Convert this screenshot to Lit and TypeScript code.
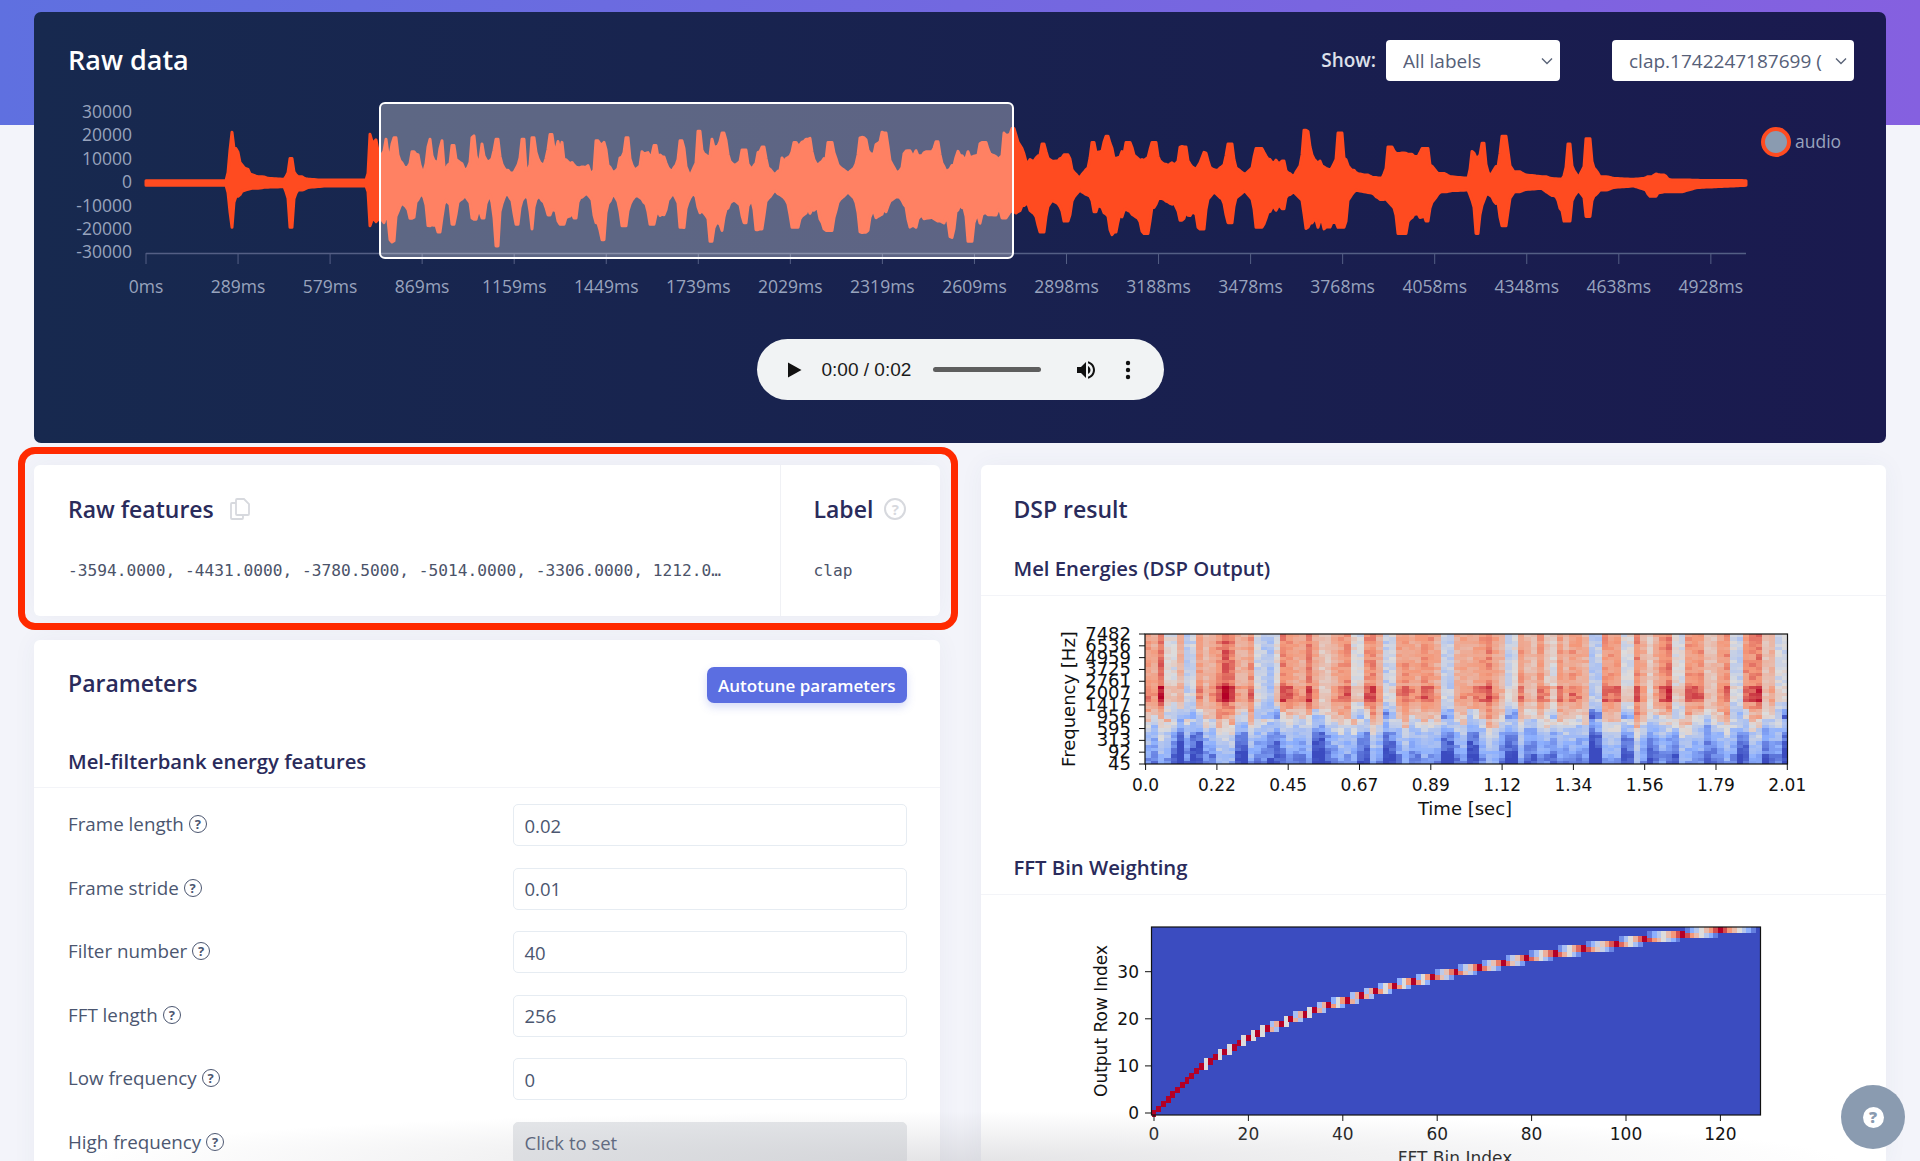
import { LitElement, css, html, svg } from "lit";
import { customElement } from "lit/decorators.js";

type Pt = [number, number];

// envelope read off the reference, in three different crops
const z7 = (p: number[]): Pt[] => pairs(p).map(([x, y]) => [360 + x / 3, 90 + y / 3]);
const z1 = (p: number[]): Pt[] => pairs(p).map(([x, y]) => [x / 1.633, y / 3]);
const z2 = (p: number[]): Pt[] => pairs(p).map(([x, y]) => [960 + x / 1.633, y / 3]);

function pairs(p: number[]): Pt[] {
    const out: Pt[] = [];
    for (let i = 0; i < p.length; i += 2) out.push([p[i], p[i + 1]]);
    return out;
}

let seed = 1337;
function rnd() {
    seed = (seed * 16807) % 2147483647;
    return seed / 2147483647;
}

const waveTop: Pt[] = [
    ...z1([238, 542, 370, 542, 378, 387, 385, 440, 400, 505, 420, 530, 465, 538, 475, 472, 485, 530, 520, 540, 600, 540, 604, 394, 615, 402]),
    ...z7([60, 190, 80, 140, 90, 165, 105, 142, 120, 210, 140, 235, 160, 185, 175, 190, 190, 245, 210, 140, 225, 215, 245, 145, 255, 240, 280, 160, 300, 200, 320, 240, 340, 135, 352, 210, 365, 155, 380, 210, 410, 140, 440, 240, 460, 250, 490, 140, 500, 250, 520, 135, 550, 230, 570, 125, 600, 150, 630, 215, 680, 225, 700, 250, 710, 145, 730, 150, 760, 250, 785, 200, 800, 135, 825, 235, 850, 180, 885, 160, 910, 200, 935, 245, 965, 145, 990, 260, 1020, 120, 1035, 180, 1060, 140, 1090, 120, 1120, 220, 1155, 175, 1175, 235, 1200, 180]),
    ...z1([1215, 445, 1245, 435, 1265, 525, 1280, 470, 1300, 420, 1320, 410, 1340, 490, 1355, 420, 1385, 520, 1410, 410, 1425, 440, 1445, 390, 1465, 520, 1480, 450, 1520, 450, 1530, 420, 1545, 510, 1567, 450]),
    ...z2([15, 450, 40, 420, 60, 460, 75, 390, 87, 375, 100, 440, 120, 480, 135, 425, 150, 470, 175, 460, 195, 535, 220, 420, 240, 400, 255, 460, 275, 420, 295, 480, 315, 420, 340, 490, 365, 435, 385, 500, 400, 455, 420, 510, 440, 425, 465, 525, 485, 440, 525, 480, 545, 530, 565, 385, 585, 480, 605, 510, 620, 390, 640, 510, 660, 525, 690, 535, 700, 435, 730, 440, 760, 440, 780, 520, 830, 535, 835, 450, 855, 425, 865, 530, 890, 400, 905, 515, 950, 530, 985, 538, 993, 425, 1010, 535, 1025, 415, 1045, 530, 1100, 538, 1130, 530, 1135, 522, 1150, 525, 1160, 540, 1284, 542]),
];

const waveBottom: Pt[] = [
    ...z1([238, 556, 370, 556, 378, 690, 385, 590, 410, 565, 465, 560, 475, 690, 485, 570, 530, 558, 600, 558, 604, 685, 615, 680]),
    ...z7([60, 400, 95, 460, 125, 340, 155, 385, 185, 315, 210, 415, 240, 435, 260, 330, 280, 410, 315, 320, 340, 390, 370, 390, 390, 320, 408, 480, 440, 310, 470, 410, 500, 315, 515, 425, 535, 320, 570, 380, 605, 410, 640, 390, 680, 310, 710, 405, 725, 460, 760, 310, 790, 415, 830, 320, 880, 410, 910, 375, 940, 310, 965, 420, 1000, 310, 1020, 370, 1055, 465, 1080, 430, 1120, 335, 1155, 405, 1175, 335, 1200, 425]),
    ...z1([1235, 695, 1265, 570, 1300, 690, 1320, 640, 1355, 700, 1385, 575, 1410, 700, 1445, 640, 1465, 590, 1490, 685, 1525, 660, 1555, 720, 1567, 620]),
    ...z2([15, 735, 40, 660, 75, 660, 87, 640, 110, 630, 135, 705, 150, 610, 175, 670, 195, 570, 225, 640, 252, 705, 275, 640, 305, 710, 325, 600, 365, 665, 395, 690, 415, 575, 440, 675, 465, 570, 487, 690, 525, 630, 545, 575, 570, 690, 585, 690, 625, 690, 645, 570, 695, 600, 720, 710, 760, 670, 785, 575, 830, 570, 845, 710, 860, 580, 890, 685, 905, 575, 950, 565, 993, 670, 1010, 570, 1025, 650, 1045, 570, 1100, 558, 1133, 590, 1150, 575, 1284, 556]),
];

const MID = 183;

// flat top at each peak, a steep wall, then a slow slide down to the valley
function sample(list: Pt[], x: number) {
    let i = 0;
    while (i < list.length - 2 && list[i + 1][0] < x) i++;
    const [ax, ay] = list[i];
    const [bx, by] = list[i + 1];
    const t = bx === ax ? 1 : Math.min(1, Math.max(0, (x - ax) / (bx - ax)));
    const aAmp = Math.abs(ay - MID);
    const bAmp = Math.abs(by - MID);
    const d = aAmp > bAmp ? t : 1 - t;
    let f = 0;
    if (d < 0.22) f = 1;
    else if (d < 0.4) f = 1 - ((d - 0.22) / 0.18) * 0.65;
    else f = 0.35 * (1 - (d - 0.4) / 0.6);
    const low = Math.min(aAmp, bAmp);
    const high = Math.max(aAmp, bAmp);
    return { amp: low + (high - low) * f, atPeak: f === 1 };
}

const wavePoints = (() => {
    const top = [...waveTop].sort((a, b) => a[0] - b[0]);
    const bottom = [...waveBottom].sort((a, b) => a[0] - b[0]);
    const up: string[] = [];
    const down: string[] = [];
    let hold = 1;
    let left = 0;
    for (let x = 146; x <= 1746; x += 2) {
        if (left-- <= 0) {
            hold = 0.62 + rnd() * 0.38;
            left = Math.floor(rnd() * 3);
        }
        const shape = (s: { amp: number; atPeak: boolean }) => {
            const core = 9;
            if (s.amp <= core) return s.amp;
            return core + (s.amp - core) * (s.atPeak ? Math.max(hold, 0.93) : hold);
        };
        up.push(`${x},${(MID - shape(sample(top, x))).toFixed(1)}`);
        down.unshift(`${x},${(MID + shape(sample(bottom, x))).toFixed(1)}`);
    }
    return [...up, ...down].join(" ");
})();

const yLabels = ["30000", "20000", "10000", "0", "-10000", "-20000", "-30000"];
const xLabels = ["0ms", "289ms", "579ms", "869ms", "1159ms", "1449ms", "1739ms", "2029ms", "2319ms", "2609ms", "2898ms", "3188ms", "3478ms", "3768ms", "4058ms", "4348ms", "4638ms", "4928ms"];

// matplotlib coolwarm, roughly
function coolwarm(t: number): string {
    const stops = [
        [59, 76, 192],
        [141, 176, 254],
        [221, 220, 220],
        [244, 152, 122],
        [180, 4, 38],
    ];
    const v = Math.min(0.999, Math.max(0, t)) * 4;
    const i = Math.floor(v);
    const f = v - i;
    const c = stops[i].map((s, k) => Math.round(s + (stops[i + 1][k] - s) * f));
    return `rgb(${c[0]},${c[1]},${c[2]})`;
}

const COLS = 100;
const ROWS = 40;
const lightCols = [240, 285, 420, 450, 610, 670, 790, 910, 990, 1075, 1135, 1240, 1350, 1440].map(x => Math.round(((x - 205) / 1260) * COLS));
const deepCols = [250, 290, 380, 460, 530, 620, 670, 790, 830, 910, 985, 1080, 1140, 1230, 1370, 1450].map(x => Math.round(((x - 205) / 1260) * COLS));

function rowProfile(r: number) {
    if (r < 2) return 0.14;
    if (r < 6) return 0.24;
    if (r < 10) return 0.32;
    if (r < 13) return 0.44;
    if (r < 16) return 0.6;
    if (r < 19) return 0.68;
    if (r < 24) return 0.77;
    return 0.7;
}

const spectroCells = (() => {
    const colEnergy: number[] = [];
    const colShift: number[] = [];
    const phaseA = rnd() * 6.28;
    const phaseB = rnd() * 6.28;
    for (let c = 0; c < COLS; c++) {
        colEnergy.push((rnd() - 0.5) * 0.1 + Math.sin(c * 0.62 + phaseA) * 0.05 + Math.sin(c * 1.37 + phaseB) * 0.05);
        colShift.push(Math.round((rnd() - 0.5) * 5));
    }
    const cells = [];
    for (let c = 0; c < COLS; c++) {
        const light = lightCols.some(l => c === l || c === l + 1);
        const deep = deepCols.some(l => c === l || c === l + 1);
        for (let r = 0; r < ROWS; r++) {
            const shifted = r < 17 ? r + colShift[c] - (deep ? 3 : 0) : r;
            const boost = r >= 19 && r < 24 ? 1.7 : 1;
            let v = rowProfile(shifted) + colEnergy[c] * boost + (rnd() - 0.5) * 0.11;
            if (light && r >= 14) v -= 0.2 + rnd() * 0.06;
            if (deep && r < 10) v -= 0.12;
            cells.push({ x: 1145 + c * 6.43, y: 635 + (ROWS - 1 - r) * 3.25, fill: coolwarm(v) });
        }
    }
    return cells;
})();

// real mel filterbank: 40 filters over 129 bins at 16 kHz
const melCells = (() => {
    const toMel = (f: number) => 2595 * Math.log10(1 + f / 700);
    const toHz = (m: number) => 700 * (Math.pow(10, m / 2595) - 1);
    const top = toMel(8000);
    const bins: number[] = [];
    for (let i = 0; i < 42; i++) bins.push(Math.floor((257 * toHz((top * i) / 41)) / 16000));
    const cells = [];
    for (let r = 0; r < 40; r++) {
        const [a, b, c] = [bins[r], bins[r + 1], bins[r + 2]];
        for (let k = a; k <= c; k++) {
            const w = k <= b ? (b === a ? 1 : (k - a) / (b - a)) : (c - k) / (c - b);
            if (w <= 0) continue;
            cells.push({ x: 1151.6 + k * 4.72, y: 1113.6 - 4.71 * (r + 0.5), fill: coolwarm(w) });
        }
    }
    return cells;
})();

const params = [
    { label: "Frame length", value: "0.02" },
    { label: "Frame stride", value: "0.01" },
    { label: "Filter number", value: "40" },
    { label: "FFT length", value: "256" },
    { label: "Low frequency", value: "0" },
    { label: "High frequency", value: "Click to set", disabled: true },
];

const chevron = html`<svg class="chev" viewBox="0 0 12 8" width="12" height="8"><path d="M1 1.5l5 5 5-5" fill="none" stroke="#5a6478" stroke-width="1.4"/></svg>`;

@customElement("app-root")
export class AppRoot extends LitElement {
    static styles = css`
        :host {
            display: block;
            position: relative;
            width: 1920px;
            height: 1161px;
            overflow: hidden;
            background: #f3f4fa;
            font-family: "Open Sans", "Noto Sans", sans-serif;
            color: #2a2b5b;
        }

        .banner {
            position: absolute;
            left: 0;
            right: 0;
            top: 0;
            height: 125px;
            background: linear-gradient(90deg, #5f70e0, #8560e0);
        }

        .page {
            position: relative;
            padding: 12px 34px 0;
        }

        /* raw data */
        .raw {
            background: linear-gradient(90deg, #17294f, #1a1a4f);
            border-radius: 7px;
            padding: 28px 0 43px;
            display: flex;
            flex-direction: column;
            align-items: center;
        }
        .raw-head {
            align-self: stretch;
            display: flex;
            align-items: center;
            height: 41px;
            padding: 0 32px 0 34px;
        }
        .raw-title {
            color: #fff;
            font-size: 27px;
            font-weight: 600;
            margin: 0 auto 0 0;
            position: relative;
            top: -1px;
        }
        .show {
            color: #dde0ea;
            font-size: 19px;
            font-weight: 600;
            margin-right: 10px;
            position: relative;
            top: -1px;
        }
        .select {
            display: flex;
            align-items: center;
            height: 41px;
            box-sizing: border-box;
            background: #fff;
            border-radius: 4px;
            padding: 0 7px 0 17px;
            font-size: 19px;
            color: #566078;
        }
        .select.labels {
            width: 174px;
            margin-right: 52px;
        }
        .select.sample {
            width: 242px;
        }
        .select span {
            flex: 1;
            white-space: nowrap;
            overflow: hidden;
            margin-right: 7px;
        }
        .select.sample span {
            margin-right: 13px;
        }
        .chart-raw {
            display: block;
            margin-top: 15px;
        }
        .chart-raw text {
            font-size: 17.5px;
            fill: #98a3bd;
        }

        /* audio bar */
        .player {
            display: flex;
            align-items: center;
            width: 407px;
            height: 61px;
            box-sizing: border-box;
            margin-top: 43px;
            padding-left: 31px;
            background: #f1f3f4;
            border-radius: 31px;
            color: #1a1a1a;
            font-family: "Liberation Sans", Arial, sans-serif;
            font-size: 19px;
        }
        .player .time {
            margin-left: 20px;
            width: 111px;
            white-space: nowrap;
        }
        .player .track {
            width: 108px;
            height: 5px;
            border-radius: 3px;
            background: #5e5e5e;
        }
        .player .vol {
            margin-left: 33px;
        }
        .player .more {
            margin-left: 27px;
        }

        /* columns */
        .columns {
            display: grid;
            grid-template-columns: 1fr 1fr;
            column-gap: 41px;
            margin-top: 22px;
        }
        .col {
            display: flex;
            flex-direction: column;
            gap: 24px;
        }
        .card {
            background: #fff;
            border-radius: 6px;
            box-shadow: 0 0 24px rgba(60, 70, 120, 0.05);
        }
        h2 {
            margin: 0;
            font-size: 23px;
            line-height: 30px;
            font-weight: 600;
            color: #2a2b5b;
        }
        h3 {
            margin: 0;
            font-size: 20.3px;
            line-height: 28px;
            font-weight: 600;
            color: #2a2b5b;
        }

        /* raw features + red marker */
        .features {
            position: relative;
            display: grid;
            grid-template-columns: 1fr 160px;
            height: 151px;
        }
        .features::after {
            content: "";
            position: absolute;
            inset: -18px -18px -14px -16px;
            border: 7px solid #ff2a00;
            border-radius: 17px;
            pointer-events: none;
        }
        .cell {
            padding: 29px 0 0 34px;
        }
        .cell + .cell {
            border-left: 1px solid #f0f1f5;
            padding-left: 33px;
        }
        .cell-head {
            display: flex;
            align-items: center;
            gap: 16px;
        }
        .cell + .cell .cell-head {
            gap: 11px;
        }
        .mono {
            margin-top: 37px;
            font-family: "DejaVu Sans Mono", "Liberation Mono", monospace;
            font-size: 16.2px;
            line-height: 20px;
            color: #4b5369;
            white-space: nowrap;
        }
        .help {
            display: inline-flex;
            align-items: center;
            justify-content: center;
            box-sizing: border-box;
            border: 1.5px solid #4b5670;
            border-radius: 50%;
            width: 18px;
            height: 18px;
            font-size: 13px;
            font-weight: 700;
            color: #4b5670;
        }
        .help.big {
            width: 22px;
            height: 22px;
            font-size: 15px;
            border: 2px solid #d7d9de;
            color: #d7d9de;
        }

        /* parameters */
        .params {
            height: 600px;
        }
        .params-head {
            display: flex;
            align-items: flex-start;
            justify-content: space-between;
            padding: 27px 33px 0 34px;
        }
        .params-head h2 {
            margin-top: 1px;
        }
        .autotune {
            border: 0;
            height: 36px;
            padding: 0 11px;
            border-radius: 7px;
            background: #5b6ee1;
            color: #fff;
            font-family: inherit;
            font-size: 17px;
            font-weight: 600;
            box-shadow: 0 4px 8px rgba(91, 110, 225, 0.25);
        }
        .section {
            padding: 8px 34px 0;
            border-bottom: 1px solid #f3f4f8;
            height: 62px;
            display: flex;
            align-items: center;
            margin-top: 23px;
            box-sizing: border-box;
        }
        .rows {
            padding: 16px 33px 0 34px;
            display: flex;
            flex-direction: column;
            gap: 21.6px;
        }
        .row {
            display: grid;
            grid-template-columns: 444.5px 1fr;
            align-items: center;
            height: 42px;
        }
        .row-label {
            display: flex;
            align-items: center;
            gap: 5px;
            font-size: 18.8px;
            color: #4b5670;
            position: relative;
            top: -1px;
        }
        .input {
            height: 42px;
            box-sizing: border-box;
            display: flex;
            align-items: center;
            padding-left: 11px;
            border: 1px solid #e6ecf2;
            border-radius: 5px;
            font-size: 18.5px;
            color: #4b5670;
        }
        .input.disabled {
            background: #e4e6e9;
            border-color: #e4e6e9;
        }

        /* dsp result */
        .dsp {
            height: 700px;
        }
        .dsp-title {
            padding: 29px 33px 0;
        }
        .dsp-sub {
            padding: 0 33px;
            height: 42px;
            margin-top: 30px;
            box-sizing: border-box;
            border-bottom: 1px solid #f3f4f8;
        }
        .dsp-sub.second {
            margin-top: 0;
            height: 46px;
            padding-top: 4px;
        }
        .plot {
            display: block;
        }
        .plot text {
            font-family: "DejaVu Sans", sans-serif;
            font-size: 17px;
            fill: #111;
        }

        /* overlays */
        .fade {
            position: absolute;
            left: 0;
            right: 0;
            bottom: 0;
            height: 50px;
            background: radial-gradient(ellipse 46% 100% at 50% 100%, rgba(190, 190, 195, 0.42), rgba(190, 190, 195, 0));
            pointer-events: none;
        }
        .bubble {
            position: absolute;
            left: 1841px;
            top: 1085px;
            width: 64px;
            height: 64px;
            border-radius: 50%;
            background: #8a9bb0;
            display: flex;
            align-items: center;
            justify-content: center;
        }
        .bubble span {
            display: flex;
            align-items: center;
            justify-content: center;
            width: 21px;
            height: 21px;
            border-radius: 50%;
            background: #fff;
            color: #8a9bb0;
            font-size: 16px;
            font-weight: 800;
        }
    `;

    renderWave() {
        return svg`
            <polygon points=${wavePoints} fill="#ff4b20" stroke="#ff4b20" stroke-width="3" stroke-linejoin="round"/>
            <line x1="146" x2="1746" y1="253.5" y2="253.5" stroke="#545f85" stroke-width="1.5"/>
            ${xLabels.map((label, i) => svg`
                <line x1=${146 + i * 92.05} x2=${146 + i * 92.05} y1="253" y2="264" stroke="#545f85" stroke-width="1"/>
                <text x=${146 + i * 92.05} y="293" text-anchor="middle">${label}</text>
            `)}
            ${yLabels.map((label, i) => svg`
                <text x="132" y=${118 + i * 23.4} text-anchor="end">${label}</text>
            `)}
            <rect x="380" y="103" width="633" height="155" rx="5" fill="rgba(255,255,255,0.3)" stroke="#fff" stroke-width="2"/>
            <circle cx="1776" cy="142" r="13" fill="#8a9bb0" stroke="#ff4b20" stroke-width="4"/>
            <text x="1795" y="148">audio</text>
        `;
    }

    renderSpectrogram() {
        const yTicks = ["7482", "6536", "4959", "3725", "2761", "2007", "1417", "956", "595", "313", "92", "45"];
        const xTicks = ["0.0", "0.22", "0.45", "0.67", "0.89", "1.12", "1.34", "1.56", "1.79", "2.01"];
        return svg`
            <g shape-rendering="crispEdges" filter="url(#soft)">
                ${spectroCells.map(c => svg`<rect x=${c.x} y=${c.y} width="6.5" height="3.3" fill=${c.fill}/>`)}
            </g>
            <rect x="1145" y="635" width="642.5" height="130" fill="none" stroke="#111" stroke-width="1.2"/>
            ${yTicks.map((t, i) => svg`
                <line x1="1139" x2="1145" y1=${635 + (i * 130) / 11} y2=${635 + (i * 130) / 11} stroke="#111"/>
                <text x="1131" y=${641 + (i * 130) / 11} text-anchor="end" style="font-size:18px">${t}</text>
            `)}
            ${xTicks.map((t, i) => svg`
                <line x1=${1145.6 + i * 71.3} x2=${1145.6 + i * 71.3} y1="765" y2="771" stroke="#111"/>
                <text x=${1145.6 + i * 71.3} y="792" text-anchor="middle">${t}</text>
            `)}
            <text x="1465" y="816" text-anchor="middle" style="font-size:18px">Time [sec]</text>
            <text transform="translate(1075 700) rotate(-90)" text-anchor="middle" style="font-size:18px">Frequency [Hz]</text>
        `;
    }

    renderMel() {
        const xTicks = [0, 20, 40, 60, 80, 100, 120];
        const yTicks = [0, 10, 20, 30];
        return svg`
            <rect x="1151.5" y="928" width="609" height="188" fill="#3b4cc0"/>
            <g shape-rendering="crispEdges" filter="url(#soft2)">
                ${melCells.map(c => svg`<rect x=${c.x} y=${c.y} width="4.8" height="6.4" fill=${c.fill}/>`)}
            </g>
            <rect x="1151.5" y="928" width="609" height="188" fill="none" stroke="#111" stroke-width="1.2"/>
            ${xTicks.map(t => svg`
                <line x1=${1154 + t * 4.72} x2=${1154 + t * 4.72} y1="1116" y2="1122" stroke="#111"/>
                <text x=${1154 + t * 4.72} y="1141" text-anchor="middle">${t}</text>
            `)}
            ${yTicks.map(t => svg`
                <line x1="1145" x2="1151" y1=${1114 - t * 4.71} y2=${1114 - t * 4.71} stroke="#111"/>
                <text x="1139" y=${1120 - t * 4.71} text-anchor="end">${t}</text>
            `)}
            <text x="1455" y="1165" text-anchor="middle">FFT Bin Index</text>
            <text transform="translate(1107 1022) rotate(-90)" text-anchor="middle">Output Row Index</text>
        `;
    }

    render() {
        return html`
            <div class="banner"></div>
            <div class="page">
                <section class="raw">
                    <div class="raw-head">
                        <h1 class="raw-title">Raw data</h1>
                        <span class="show">Show:</span>
                        <div class="select labels"><span>All labels</span>${chevron}</div>
                        <div class="select sample"><span>clap.1742247187699 (clap)</span>${chevron}</div>
                    </div>
                    <svg class="chart-raw" width="1852" height="200" viewBox="34 96 1852 200">${this.renderWave()}</svg>
                    <div class="player">
                        <svg width="14" height="16" viewBox="0 0 14 16"><path d="M0 0.5L13.5 8 0 15.5z" fill="#111"/></svg>
                        <span class="time">0:00 / 0:02</span>
                        <div class="track"></div>
                        <svg class="vol" width="24" height="24" viewBox="0 0 24 24"><path fill="#111" d="M3 9v6h4l5 5V4L7 9H3zm13.5 3c0-1.77-1.02-3.29-2.5-4.03v8.05c1.48-.73 2.5-2.25 2.5-4.02zM14 3.23v2.06c2.89.86 5 3.54 5 6.71s-2.11 5.85-5 6.71v2.06c4.01-.91 7-4.49 7-8.77s-2.99-7.86-7-8.77z"/></svg>
                        <svg class="more" width="6" height="20" viewBox="0 0 6 20"><circle cx="3" cy="3" r="2.2" fill="#111"/><circle cx="3" cy="10" r="2.2" fill="#111"/><circle cx="3" cy="17" r="2.2" fill="#111"/></svg>
                    </div>
                </section>

                <div class="columns">
                    <div class="col">
                        <section class="card features">
                            <div class="cell">
                                <div class="cell-head">
                                    <h2>Raw features</h2>
                                    <svg width="20" height="24" viewBox="0 0 20 24" fill="none" stroke="#d7d9de" stroke-width="1.8"><path d="M7 2h7l5 5v10a1 1 0 0 1-1 1H7a1 1 0 0 1-1-1V3a1 1 0 0 1 1-1z"/><path d="M6 6H2a1 1 0 0 0-1 1v14a1 1 0 0 0 1 1h10a1 1 0 0 0 1-1v-3"/></svg>
                                </div>
                                <div class="mono">-3594.0000, -4431.0000, -3780.5000, -5014.0000, -3306.0000, 1212.0…</div>
                            </div>
                            <div class="cell">
                                <div class="cell-head">
                                    <h2>Label</h2>
                                    <span class="help big">?</span>
                                </div>
                                <div class="mono">clap</div>
                            </div>
                        </section>

                        <section class="card params">
                            <div class="params-head">
                                <h2>Parameters</h2>
                                <button class="autotune">Autotune parameters</button>
                            </div>
                            <div class="section"><h3>Mel-filterbank energy features</h3></div>
                            <div class="rows">
                                ${params.map(p => html`
                                    <div class="row">
                                        <div class="row-label">${p.label}<span class="help">?</span></div>
                                        <div class="input ${p.disabled ? "disabled" : ""}">${p.value}</div>
                                    </div>
                                `)}
                            </div>
                        </section>
                    </div>

                    <div class="col">
                        <section class="card dsp">
                            <h2 class="dsp-title">DSP result</h2>
                            <div class="dsp-sub"><h3>Mel Energies (DSP Output)</h3></div>
                            <svg class="plot" width="905" height="253" viewBox="981 597 905 253">
                                <defs>
                                    <filter id="soft" x="0" y="0" width="100%" height="100%"><feGaussianBlur stdDeviation="0.7"/></filter>
                                    <filter id="soft2" x="-2%" y="-2%" width="104%" height="104%"><feGaussianBlur stdDeviation="0.5"/></filter>
                                </defs>
                                ${this.renderSpectrogram()}
                            </svg>
                            <div class="dsp-sub second"><h3>FFT Bin Weighting</h3></div>
                            <svg class="plot" width="905" height="270" viewBox="981 896 905 270">${this.renderMel()}</svg>
                        </section>
                    </div>
                </div>
            </div>
            <div class="fade"></div>
            <div class="bubble"><span>?</span></div>
        `;
    }
}
